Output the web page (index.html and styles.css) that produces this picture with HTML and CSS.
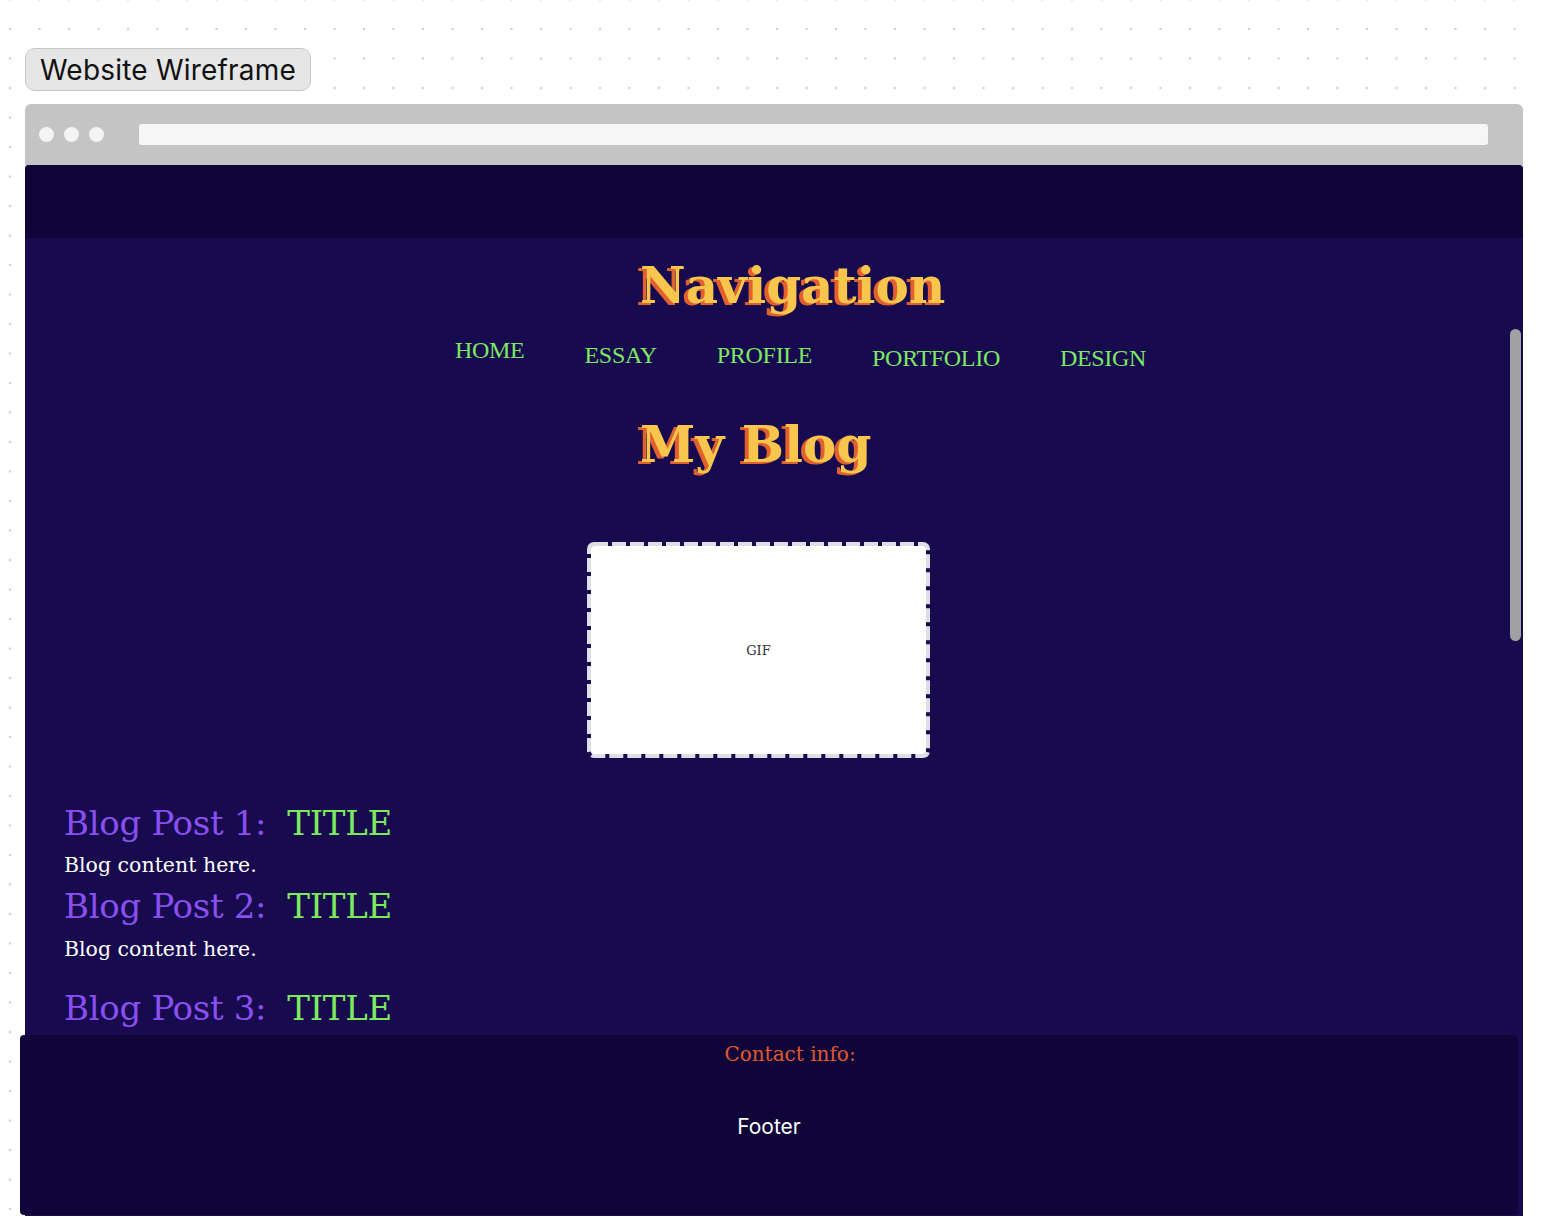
FILE: index.html
```html
<!DOCTYPE html>
<html lang="en">
<head>
<meta charset="utf-8">
<title>Website Wireframe</title>
<link rel="stylesheet" href="styles.css">
</head>
<body>
<div class="canvas">
  <div class="title-btn">Website Wireframe</div>
  <div class="window">
    <div class="chrome">
      <div class="dots"><span class="dot"></span><span class="dot"></span><span class="dot"></span></div>
      <div class="address"></div>
    </div>
    <div class="viewport">
      <div class="site-header"></div>
      <main class="site-main">
        <h1 class="display nav-title">Navigation</h1>
        <nav class="nav">
          <a class="nav-link">HOME</a>
          <a class="nav-link drop-1">ESSAY</a>
          <a class="nav-link drop-1">PROFILE</a>
          <a class="nav-link drop-2">PORTFOLIO</a>
          <a class="nav-link drop-2">DESIGN</a>
        </nav>
        <h1 class="display blog-title">My Blog</h1>
        <div class="gif">
          <svg class="gif-border" width="343" height="216" viewBox="0 0 343 216" aria-hidden="true">
            <rect x="2" y="2" width="339" height="212" rx="5" ry="5" fill="none" stroke="#dedee4" stroke-width="4" stroke-dasharray="14 4"/>
          </svg>
          <span>GIF</span>
        </div>
        <section class="posts">
          <h2 class="post-title">Blog Post 1:&nbsp; <span class="accent">TITLE</span></h2>
          <p class="post-body">Blog content here.</p>
          <h2 class="post-title">Blog Post 2:&nbsp; <span class="accent">TITLE</span></h2>
          <p class="post-body last">Blog content here.</p>
          <h2 class="post-title">Blog Post 3:&nbsp; <span class="accent">TITLE</span></h2>
        </section>
      </main>
      <footer class="site-footer">
        <p class="contact">Contact info:</p>
        <p class="footer-label">Footer</p>
      </footer>
      <div class="scrollbar"></div>
    </div>
  </div>
</div>
</body>
</html>
```

FILE: styles.css
```css
html, body {
  margin: 0;
  padding: 0;
}

body {
  width: 1543px;
  height: 1223px;
  overflow: hidden;
  background-color: #ffffff;
  background-image: radial-gradient(circle, #cfcfcf 1px, transparent 1.6px);
  background-size: 29.5px 29.5px;
  background-position: -4.75px 14.25px;
  font-family: "DejaVu Serif", serif;
}

.canvas {
  padding: 48px 0 0 25px;
}

.title-btn {
  display: inline-flex;
  align-items: center;
  box-sizing: border-box;
  height: 43px;
  padding: 0 14px 0 14px;
  background: #e6e6e6;
  border: 1px solid #c6c6c6;
  border-radius: 10px;
  font-family: "Inter", "Noto Sans", sans-serif;
  font-size: 28px;
  color: #111111;
  letter-spacing: 0.2px;
}

.window {
  width: 1498px;
  margin-top: 13px;
}

.chrome {
  display: flex;
  align-items: center;
  height: 61px;
  padding: 0 35px 0 14px;
  background: #c4c4c4;
  border-radius: 6px 6px 0 0;
}

.dots {
  display: flex;
  gap: 10px;
}

.dot {
  width: 15px;
  height: 15px;
  border-radius: 50%;
  background: #f4f4f4;
}

.address {
  flex: 1;
  height: 21px;
  margin-left: 35px;
  background: #f6f6f6;
  border-radius: 3px;
}

.viewport {
  position: relative;
  height: 1051px;
  background: #170a4f;
  border-radius: 4px 4px 0 0;
}

.site-header {
  height: 73px;
  background: #0f0539;
  border-radius: 4px 4px 0 0;
}

.site-main {
  display: flex;
  flex-direction: column;
  align-items: flex-start;
}

.display {
  margin: 0;
  padding-left: 615px;
  font-family: "DejaVu Serif", serif;
  font-weight: 700;
  font-size: 50px;
  line-height: 60px;
  color: #f8c64d;
  text-shadow: -4px 2px 0 #e2602e;
}

.nav-title {
  margin-top: 18px;
}

.nav {
  display: flex;
  align-items: flex-start;
  gap: 60px;
  margin-top: 19px;
  padding-left: 430px;
}

.nav-link {
  font-family: "Liberation Serif", "Times New Roman", serif;
  font-size: 24px;
  line-height: 30px;
  letter-spacing: -0.3px;
  color: #7ee862;
  text-decoration: none;
}

.drop-1 {
  padding-top: 5px;
}

.drop-2 {
  padding-top: 8px;
}

.blog-title {
  margin-top: 42px;
}

.gif {
  position: relative;
  display: flex;
  align-items: center;
  justify-content: center;
  box-sizing: border-box;
  width: 343px;
  height: 216px;
  margin: 67px 0 0 562px;
  background: #ffffff;
  background-clip: padding-box;
  border: 4px solid transparent;
  border-radius: 6px;
  font-family: "DejaVu Serif", serif;
  font-size: 13px;
  color: #333333;
}

.gif-border {
  position: absolute;
  top: -4px;
  left: -4px;
}

.posts {
  padding-left: 39px;
  margin-top: 45px;
}

.post-title {
  margin: 0;
  font-family: "DejaVu Serif", serif;
  font-weight: 400;
  font-size: 34px;
  line-height: 40px;
  color: #8a4ff0;
  letter-spacing: -0.3px;
  white-space: pre;
}

.accent {
  color: #7cea5c;
}

.post-body {
  margin: 9px 0 8px;
  font-size: 20.5px;
  line-height: 26px;
  color: #ffffff;
}

.post-body.last {
  margin: 10px 0 26px;
}

.site-footer {
  box-sizing: border-box;
  width: 1498px;
  height: 180px;
  margin: 7px 0 0 -5px;
  padding: 7px 0 0 42px;
  background: #0f0539;
  border-radius: 4px;
  text-align: center;
}

.contact {
  margin: 0;
  font-family: "DejaVu Serif", serif;
  font-size: 20px;
  line-height: 24px;
  color: #e0592f;
}

.footer-label {
  margin: 48px 0 0 -42px;
  font-family: "Inter", "Noto Sans", sans-serif;
  font-size: 21px;
  line-height: 26px;
  color: #ffffff;
}

.scrollbar {
  position: absolute;
  top: 164px;
  right: 2px;
  width: 11px;
  height: 312px;
  border-radius: 6px;
  background: #a1a1a1;
}
```
